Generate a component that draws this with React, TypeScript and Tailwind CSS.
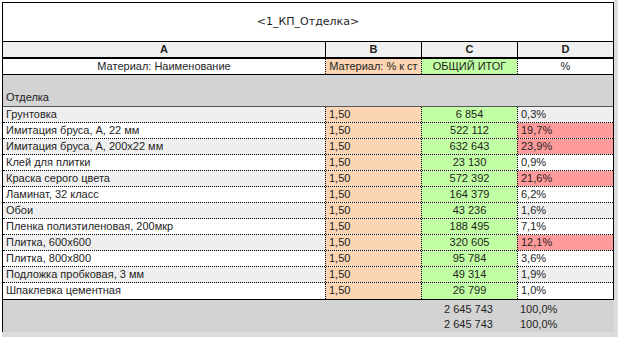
import React from "react";

const rows = [
  { name: "Грунтовка", k: "1,50", total: "6 854", pct: "0,3%", hot: false },
  { name: "Имитация бруса, А, 22 мм", k: "1,50", total: "522 112", pct: "19,7%", hot: true },
  { name: "Имитация бруса, А, 200x22 мм", k: "1,50", total: "632 643", pct: "23,9%", hot: true },
  { name: "Клей для плитки", k: "1,50", total: "23 130", pct: "0,9%", hot: false },
  { name: "Краска серого цвета", k: "1,50", total: "572 392", pct: "21,6%", hot: true },
  { name: "Ламинат, 32 класс", k: "1,50", total: "164 379", pct: "6,2%", hot: false },
  { name: "Обои", k: "1,50", total: "43 236", pct: "1,6%", hot: false },
  { name: "Пленка полиэтиленовая, 200мкр", k: "1,50", total: "188 495", pct: "7,1%", hot: false },
  { name: "Плитка, 600x600", k: "1,50", total: "320 605", pct: "12,1%", hot: true },
  { name: "Плитка, 800x800", k: "1,50", total: "95 784", pct: "3,6%", hot: false },
  { name: "Подложка пробковая, 3 мм", k: "1,50", total: "49 314", pct: "1,9%", hot: false },
  { name: "Шпаклевка цементная", k: "1,50", total: "26 799", pct: "1,0%", hot: false },
];

const font = { fontFamily: "'Liberation Sans', Arial, sans-serif" };

export default function App() {
  return (
    <div className="flex w-[618px] h-[337px] bg-white text-[11px] text-[#1e1e1e]" style={font}>
      <div className="w-[2px]" />
      <div className="flex flex-col w-[612px]">
        {/* Title */}
        <div className="mt-[2px] h-[40px] border border-black flex items-center justify-center text-[11px] pt-[1px]" style={{ fontFamily: "'DejaVu Sans', sans-serif" }}>
          &lt;1_КП_Отделка&gt;
        </div>

        <div className="flex flex-col border-x border-black">
          {/* Column letters */}
          <div className="flex h-[15px] bg-[#f0f0f0] font-bold leading-[15px] text-center">
            <div className="w-[322px]">A</div>
            <div className="w-[96px] border-l border-black">B</div>
            <div className="w-[96px] border-l border-black">C</div>
            <div className="w-[96px] border-l border-black">D</div>
          </div>

          {/* Field headers */}
          <div className="flex h-[18px] border-t-2 border-b border-black bg-white leading-[15px] text-center">
            <div className="w-[322px]">Материал: Наименование</div>
            <div className="w-[96px] border-l border-dotted border-black bg-[#fcd5b4]">Материал: % к ст</div>
            <div className="w-[96px] border-l border-dotted border-black bg-[#c2ffa4]">ОБЩИЙ ИТОГ</div>
            <div className="w-[96px] border-l border-dotted border-black">%</div>
          </div>

          {/* Group header */}
          <div className="flex items-end h-[31px] bg-[#d3d3d3] pl-[3px] pb-[1px]">Отделка</div>

          {/* Body */}
          <div className="flex flex-col border-t border-[#555] border-b border-b-black">
            {rows.map((r, i) => (
              <div
                key={r.name}
                className={`flex h-[16px] leading-[15px] ${i < rows.length - 1 ? "border-b border-dotted border-black" : ""} ${i % 2 === 0 ? "bg-[#efefef]" : "bg-white"}`}
              >
                <div className="w-[322px] pl-[3px]">{r.name}</div>
                <div className="w-[96px] border-l border-dotted border-black bg-[#fcd5b4] pl-[3px]">{r.k}</div>
                <div className="w-[96px] border-l border-dotted border-black bg-[#c2ffa4] text-center">{r.total}</div>
                <div className={`w-[96px] border-l border-dotted border-black pl-[3px] ${r.hot ? "bg-[#ff9b9b]" : ""}`}>{r.pct}</div>
              </div>
            ))}
          </div>
        </div>

        {/* Totals */}
        <div className="flex flex-col h-[32px] bg-[#d3d3d3] border-l border-black pt-[2px]">
          {[0, 1].map((n) => (
            <div key={n} className="flex h-[16px] leading-[15px]">
              <div className="w-[321px]" />
              <div className="w-[96px]" />
              <div className="w-[96px] pl-[1px] text-center">2 645 743</div>
              <div className="w-[96px] pl-[4px]">100,0%</div>
            </div>
          ))}
        </div>
        <div className="flex-1 bg-[#dcdcdc]" />
      </div>
      <div className="flex-1 bg-[#dcdcdc]" />
    </div>
  );
}
